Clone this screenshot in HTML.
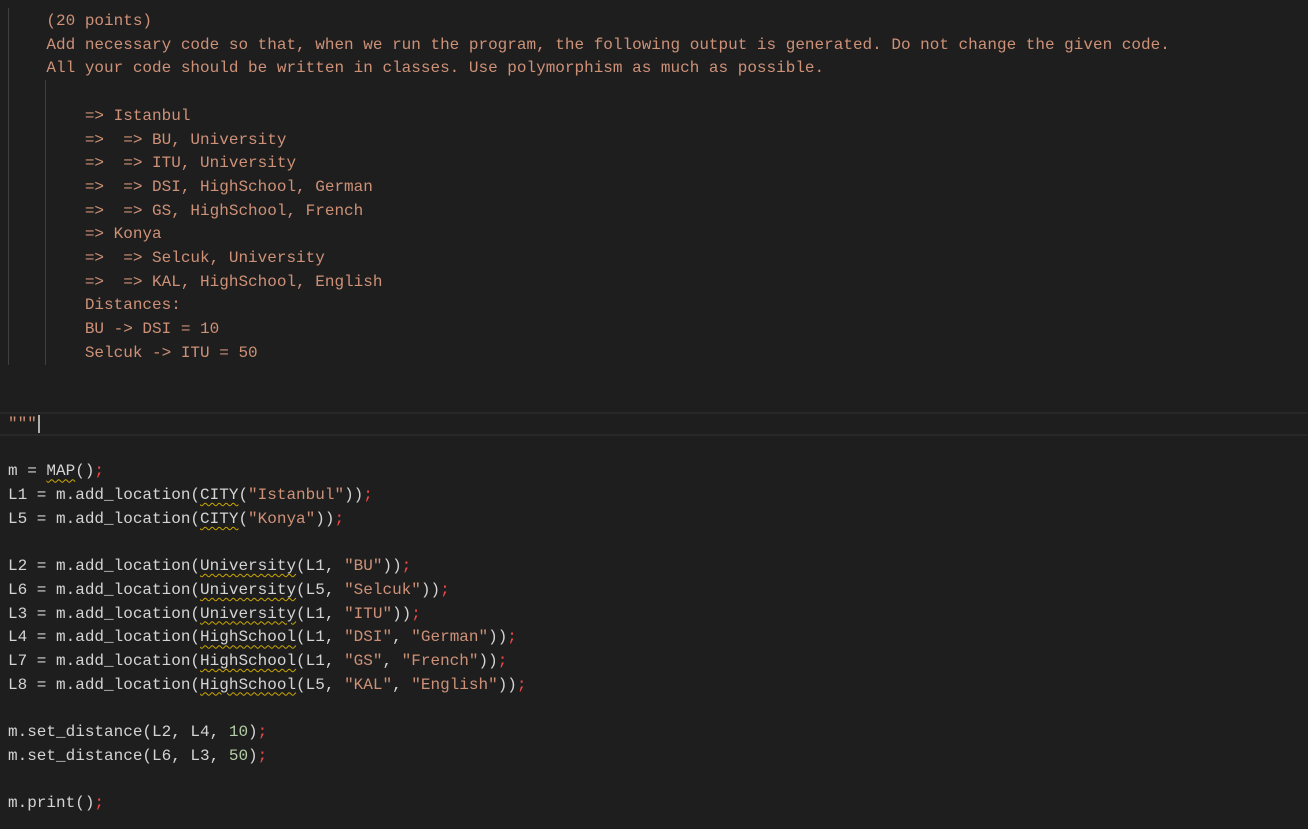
<!DOCTYPE html>
<html><head><style>
html,body{margin:0;padding:0;background:#1e1e1e;width:1308px;height:829px;overflow:hidden}
#ed{position:absolute;left:8px;top:10px;font-family:"Liberation Mono",monospace;font-size:16px;line-height:23.7px;color:#d4d4d4;white-space:pre}
.s{color:#ce9178}.r{color:#f44747}.n{color:#b5cea8}
.w{text-decoration:underline wavy #cca700;text-decoration-thickness:1px;text-underline-offset:3px}
.g{position:absolute;width:1px;background:#404040}
.cur{position:absolute;left:0;top:412px;width:1308px;height:24px;border-top:2px solid #282828;border-bottom:2px solid #282828;box-sizing:border-box}
</style></head><body>
<div class="cur"></div>
<div class="g" style="left:8px;top:8px;height:357px"></div>
<div class="g" style="left:45px;top:80px;height:285px"></div>
<div id="ed"><span class="s">    (20 points)
    Add necessary code so that, when we run the program, the following output is generated. Do not change the given code.
    All your code should be written in classes. Use polymorphism as much as possible.

        =&gt; Istanbul
        =&gt;  =&gt; BU, University
        =&gt;  =&gt; ITU, University
        =&gt;  =&gt; DSI, HighSchool, German
        =&gt;  =&gt; GS, HighSchool, French
        =&gt; Konya
        =&gt;  =&gt; Selcuk, University
        =&gt;  =&gt; KAL, HighSchool, English
        Distances:
        BU -&gt; DSI = 10
        Selcuk -&gt; ITU = 50


"""</span><span style="border-left:2px solid #aeafad;margin-left:1px"></span>

m = <span class="w">MAP</span>()<span class="r">;</span>
L1 = m.add_location(<span class="w">CITY</span>(<span class="s">"Istanbul"</span>))<span class="r">;</span>
L5 = m.add_location(<span class="w">CITY</span>(<span class="s">"Konya"</span>))<span class="r">;</span>

L2 = m.add_location(<span class="w">University</span>(L1, <span class="s">"BU"</span>))<span class="r">;</span>
L6 = m.add_location(<span class="w">University</span>(L5, <span class="s">"Selcuk"</span>))<span class="r">;</span>
L3 = m.add_location(<span class="w">University</span>(L1, <span class="s">"ITU"</span>))<span class="r">;</span>
L4 = m.add_location(<span class="w">HighSchool</span>(L1, <span class="s">"DSI"</span>, <span class="s">"German"</span>))<span class="r">;</span>
L7 = m.add_location(<span class="w">HighSchool</span>(L1, <span class="s">"GS"</span>, <span class="s">"French"</span>))<span class="r">;</span>
L8 = m.add_location(<span class="w">HighSchool</span>(L5, <span class="s">"KAL"</span>, <span class="s">"English"</span>))<span class="r">;</span>

m.set_distance(L2, L4, <span class="n">10</span>)<span class="r">;</span>
m.set_distance(L6, L3, <span class="n">50</span>)<span class="r">;</span>

m.print()<span class="r">;</span></div>
</body></html>
